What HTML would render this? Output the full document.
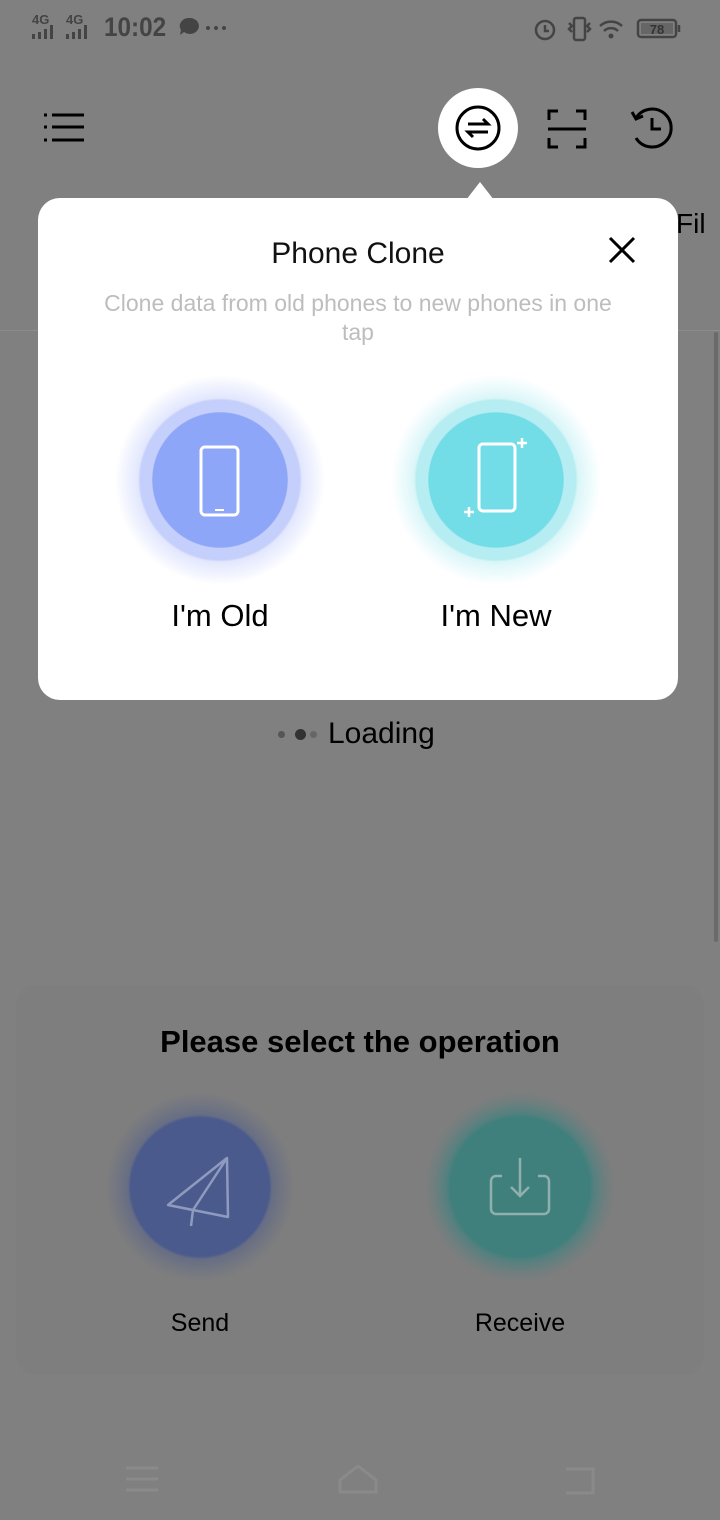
<!DOCTYPE html>
<html><head><meta charset="utf-8"><style>
*{margin:0;padding:0;box-sizing:border-box}
body{width:720px;height:1520px;background:#808080;position:relative;overflow:hidden;font-family:"Liberation Sans",sans-serif}
.a{position:absolute}
.t{color:#000}
</style></head><body>
<!-- status bar -->
<div class="a" style="left:32px;top:12px;font-size:13px;font-weight:bold;color:#444">4G</div>
<div class="a" style="left:66px;top:12px;font-size:13px;font-weight:bold;color:#444">4G</div>
<svg class="a" style="left:32px;top:24px" width="70" height="16"><g fill="#444"><rect x="0" y="10" width="3" height="5"/><rect x="6" y="8" width="3" height="7"/><rect x="12" y="5" width="3" height="10"/><rect x="18" y="1" width="3" height="14"/><rect x="34" y="10" width="3" height="5"/><rect x="40" y="8" width="3" height="7"/><rect x="46" y="5" width="3" height="10"/><rect x="52" y="1" width="3" height="14"/></g></svg>
<div class="a" style="left:104px;top:12px;font-size:27px;font-weight:bold;color:#444;transform:scaleX(.9);transform-origin:left">10:02</div>
<svg class="a" style="left:178px;top:16px" width="52" height="22"><path d="M11 2a9 8 0 1 1-5 14l-4 3 1-5a9 8 0 0 1 8-12z" fill="#444"/><circle cx="30" cy="12" r="2" fill="#444"/><circle cx="38" cy="12" r="2" fill="#444"/><circle cx="46" cy="12" r="2" fill="#444"/></svg>
<svg class="a" style="left:530px;top:14px" width="160" height="30"><g fill="none" stroke="#444" stroke-width="2.5"><circle cx="15" cy="16" r="9"/><path d="M15 11v6h4"/><rect x="44" y="4" width="11" height="22" rx="2"/><path d="M39 9l3 3-3 3 3 3M60 9l-3 3 3 3-3 3"/><path d="M70 12a16 16 0 0 1 22 0M74 17a10 10 0 0 1 14 0"/><rect x="108" y="6" width="38" height="17" rx="3"/><path d="M149 11v7"/></g><circle cx="81" cy="22" r="2.5" fill="#444"/><rect x="111" y="9" width="32" height="11" fill="#666"/><text x="127" y="20" font-size="13" font-weight="bold" fill="#333" text-anchor="middle" font-family="Liberation Sans">78</text></svg>
<!-- toolbar -->
<svg class="a" style="left:40px;top:110px" width="50" height="36"><g stroke="#000" stroke-width="3"><path d="M12 5h32M12 17h32M12 30h32"/><path d="M4 5h3M4 17h3M4 30h3"/></g></svg>
<div class="a" style="left:438px;top:88px;width:80px;height:80px;border-radius:50%;background:#fff"></div>
<svg class="a" style="left:453px;top:103px" width="50" height="50"><circle cx="25" cy="25" r="21" fill="none" stroke="#000" stroke-width="3"/><path d="M15 21h20l-5-5M35 29H15l5 5" fill="none" stroke="#000" stroke-width="3"/></svg>
<svg class="a" style="left:544px;top:106px" width="46" height="46"><g fill="none" stroke="#000" stroke-width="3"><path d="M5 14V5h9M32 5h9v9M5 32v9h9M32 41h9v-9M4 23h38"/></g></svg>
<svg class="a" style="left:628px;top:104px" width="50" height="48"><g fill="none" stroke="#000" stroke-width="3"><path d="M8 14A19 19 0 1 1 8 34"/><path d="M4 8l4 7 7-3"/><path d="M24 14v11h9"/></g></svg>
<div class="a t" style="left:676px;top:208px;font-size:28px">Fil</div>
<div class="a" style="left:0;top:330px;width:720px;height:1px;background:#8c8c8c"></div>
<div class="a" style="left:714px;top:332px;width:4px;height:610px;background:#6a6a6a;border-radius:2px"></div>
<!-- loading -->
<div class="a" style="left:278px;top:731px;width:7px;height:7px;border-radius:50%;background:#555"></div>
<div class="a" style="left:295px;top:729px;width:11px;height:11px;border-radius:50%;background:#333"></div>
<div class="a" style="left:310px;top:731px;width:7px;height:7px;border-radius:50%;background:#666"></div>
<div class="a t" style="left:328px;top:717px;font-size:30px">Loading</div>
<!-- bottom card -->
<div class="a" style="left:16px;top:985px;width:688px;height:390px;border-radius:20px;background:#7e7e7e"></div>
<div class="a t" style="left:0;width:720px;top:1024px;text-align:center;font-size:31px;font-weight:bold">Please select the operation</div>
<div class="a" style="left:105px;top:1092px;width:190px;height:190px;border-radius:50%;background:radial-gradient(circle closest-side,#4a5a8c 73%,rgba(74,90,140,.45) 76%,rgba(74,90,140,.2) 88%,rgba(128,128,128,0) 100%)"></div>
<svg class="a" style="left:160px;top:1150px" width="80" height="80"><g fill="none" stroke="#8e9bbf" stroke-width="2.5" stroke-linejoin="round"><path d="M67 8L8 55l60 12z"/><path d="M67 8L33 60l-2 16"/></g></svg>
<div class="a" style="left:425px;top:1092px;width:190px;height:190px;border-radius:50%;background:radial-gradient(circle closest-side,#3f7f7c 73%,rgba(50,130,128,.55) 78%,rgba(50,130,128,.2) 90%,rgba(128,128,128,0) 100%)"></div>
<svg class="a" style="left:480px;top:1148px" width="80" height="80"><g fill="none" stroke="#8fb0ae" stroke-width="2.5"><path d="M22 28h-6a5 5 0 0 0-5 5v28a5 5 0 0 0 5 5h48a5 5 0 0 0 5-5V33a5 5 0 0 0-5-5h-6"/><path d="M40 10v38M31 39l9 9 9-9"/></g></svg>
<div class="a t" style="left:100px;width:200px;top:1309px;text-align:center;font-size:25px">Send</div>
<div class="a t" style="left:420px;width:200px;top:1309px;text-align:center;font-size:25px">Receive</div>
<!-- nav -->
<svg class="a" style="left:120px;top:1460px" width="480" height="40"><g fill="none" stroke="#8a8a8a" stroke-width="3"><path d="M6 8h32M6 19h32M6 30h32"/><path d="M220 20l18-14 18 14v12h-36z"/><path d="M446 9h27v24h-27"/></g></svg>
<!-- dialog -->
<div class="a" style="left:466px;top:182px;width:0;height:0;border-left:14px solid transparent;border-right:14px solid transparent;border-bottom:18px solid #fff"></div>
<div class="a" style="left:38px;top:198px;width:640px;height:502px;border-radius:22px;background:#fff"></div>
<div class="a t" style="left:38px;width:640px;top:237px;text-align:center;font-size:30px;color:#111">Phone Clone</div>
<svg class="a" style="left:606px;top:234px" width="32" height="32"><path d="M4 4l24 24M28 4L4 28" stroke="#000" stroke-width="3"/></svg>
<div class="a" style="left:88px;width:540px;top:289px;text-align:center;font-size:23px;line-height:29px;color:#bdbdbd">Clone data from old phones to new phones in one tap</div>
<div class="a" style="left:115px;top:375px;width:210px;height:210px;border-radius:50%;background:radial-gradient(circle closest-side,#8ea6f8 64%,#c5cffb 65%,#c5cffb 76%,#e2e7fd 78%,#eef1fe 88%,rgba(255,255,255,0) 100%)"></div>
<svg class="a" style="left:190px;top:440px" width="60" height="80"><rect x="11" y="7" width="37" height="68" rx="4" fill="none" stroke="#fff" stroke-width="3"/><path d="M25 70h9" stroke="#fff" stroke-width="2"/></svg>
<div class="a" style="left:391px;top:375px;width:210px;height:210px;border-radius:50%;background:radial-gradient(circle closest-side,#73dde7 64%,#b6edf2 65%,#b6edf2 76%,#daf6f8 78%,#ebfafc 88%,rgba(255,255,255,0) 100%)"></div>
<svg class="a" style="left:456px;top:436px" width="80" height="86"><rect x="23" y="8" width="36" height="67" rx="4" fill="none" stroke="#fff" stroke-width="3"/><path d="M66 2v10M61 7h10M13 71v10M8 76h10" stroke="#fff" stroke-width="2.5"/></svg>
<div class="a t" style="left:120px;width:200px;top:598px;text-align:center;font-size:31px">I'm Old</div>
<div class="a t" style="left:396px;width:200px;top:598px;text-align:center;font-size:31px">I'm New</div>
</body></html>
